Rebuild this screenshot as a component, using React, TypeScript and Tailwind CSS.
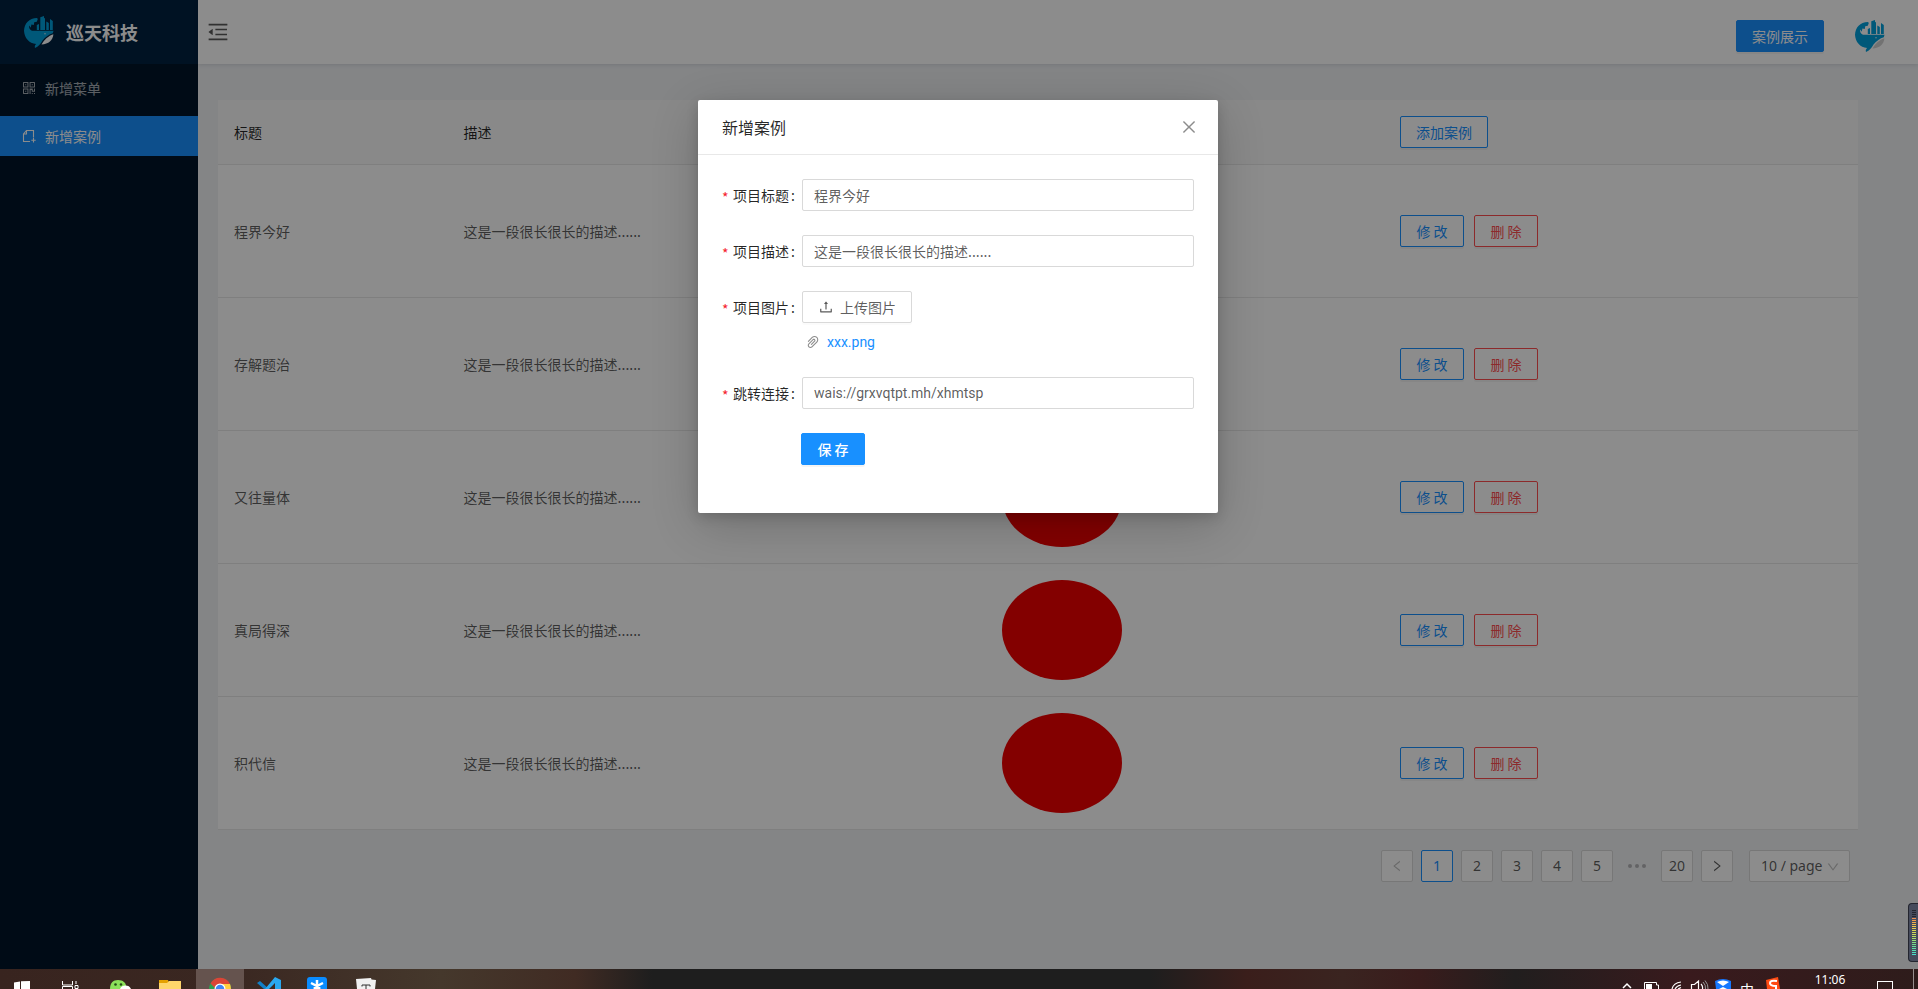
import { useState } from "react";
import type { ReactNode } from "react";
import {
  AiOutlineClose,
  AiOutlineDown,
  AiOutlineLeft,
  AiOutlineMenuFold,
  AiOutlinePaperClip,
  AiOutlineQrcode,
  AiOutlineRight,
  AiOutlineUpload,
} from "react-icons/ai";

type Case = { id: number; title: string; desc: string };

const DESC = "这是一段很长很长的描述......";

const cases: Case[] = [
  { id: 1, title: "程界今好", desc: DESC },
  { id: 2, title: "存解题治", desc: DESC },
  { id: 3, title: "又往量体", desc: DESC },
  { id: 4, title: "真局得深", desc: DESC },
  { id: 5, title: "积代信", desc: DESC },
];

const Logo = ({ belly }: { belly: string }) => (
  <svg viewBox="0 0 30 32" className="h-8 w-[30px] shrink-0" aria-hidden="true">
    <path d="M13 2C5 2 .3 7.500 0 15h8c-2.500-1.500-3.200-3.200-2.800-5.400l1.600 2.200.6-3.200 2.400.4.4-2.800 2.600-.4 1-2.800z" fill="#00a0dc" />
    <path d="M12.800 14V9l2.200-1v6zM16.300 14V1.200L20 0v1.800l1 .8V14zM22.300 14V5.600l2.500 1.400v7zM26 14V3l2.800 2v9z" fill="#00a0dc" />
    <path d="M0 14.800h29.500L28.800 17.200C25 18.200 21.500 20.800 18.500 24.500 16.500 28 14.500 30.800 11 32c-.6-1.800 0-3 1.200-4C5 27.400.4 22 0 14.800z" fill="#00a0dc" />
    <path d="M29.400 18.200C29 24 24.500 28.200 17.500 28.400 20.500 23.500 23.500 20.400 29.400 18.200z" fill={belly} />
    <circle cx="21" cy="17.800" r=".7" fill="#e6f4fb" />
  </svg>
);

const PageAddIcon = () => (
  <svg viewBox="0 0 16 16" className="h-4 w-4" fill="none" stroke="currentColor" strokeWidth="1.1" aria-hidden="true">
    <path d="M9 13.500H2.500V6L5.500 2.500h7V9.500M5.500 2.500V6h-3M12.500 10v4.500M10.300 12.200h4.400" />
  </svg>
);

const Button = ({ kind, children, onClick }: { kind: string; children: ReactNode; onClick?: () => void }) => {
  const styles: Record<string, string> = {
    primary: "border-[#1890ff] bg-[#1890ff] text-white",
    outline: "border-[#1890ff] bg-white text-[#1890ff]",
    danger: "border-[#ff4d4f] bg-white text-[#ff4d4f]",
  };
  return (
    <button
      type="button"
      onClick={onClick}
      className={`h-8 min-w-16 rounded-xs border px-[15px] text-sm leading-5 whitespace-nowrap shadow-[0_2px_0_rgba(0,0,0,0.045)] cursor-pointer ${styles[kind]}`}
    >
      {children}
    </button>
  );
};

const Sidebar = () => (
  <aside className="w-[198px] shrink-0 bg-[#001529]">
    <div className="flex h-16 items-center gap-3 bg-[#002140] pl-6">
      <Logo belly="#ffffff" />
      <h1 className="text-lg font-bold text-white">巡天科技</h1>
    </div>
    <nav className="flex flex-col gap-2 pt-1 text-sm">
      <a href="#menu" className="flex h-10 items-center gap-2 pl-[21px] text-white/65">
        <AiOutlineQrcode size={16} />
        新增菜单
      </a>
      <a href="#case" className="flex h-10 items-center gap-2 bg-[#1890ff] pl-[21px] text-white">
        <PageAddIcon />
        新增案例
      </a>
    </nav>
  </aside>
);

const Header = () => (
  <header className="flex h-16 items-center justify-between bg-white pr-[33px] pl-2 shadow-[0_1px_4px_rgba(0,21,41,0.12)]">
    <button type="button" aria-label="折叠菜单" className="text-black/65 cursor-pointer">
      <AiOutlineMenuFold size={24} />
    </button>
    <div className="flex items-center gap-[31px] pt-2">
      <Button kind="primary">案例展示</Button>
      <Logo belly="#d0d0d0" />
    </div>
  </header>
);

const CaseTable = ({ onAdd }: { onAdd: () => void }) => (
  <table className="w-full table-fixed border-separate border-spacing-0 bg-white text-left text-sm text-black/65">
    <colgroup>
      <col className="w-[14%]" />
      <col className="w-[32.8%]" />
      <col className="w-[24.3%]" />
      <col />
    </colgroup>
    <thead>
      <tr className="bg-[#fafafa] text-black/85">
        <th className="border-b border-[#e8e8e8] p-4 font-normal">标题</th>
        <th className="border-b border-[#e8e8e8] p-4 font-normal">描述</th>
        <th className="border-b border-[#e8e8e8] p-4 font-normal">图片</th>
        <th className="border-b border-[#e8e8e8] p-4 font-normal">
          <Button kind="outline" onClick={onAdd}>添加案例</Button>
        </th>
      </tr>
    </thead>
    <tbody>
      {cases.map((item) => (
        <tr key={item.id}>
          <td className="border-b border-[#e8e8e8] p-4">{item.title}</td>
          <td className="border-b border-[#e8e8e8] p-4">{item.desc}</td>
          <td className="border-b border-[#e8e8e8] p-4">
            <svg viewBox="0 0 120 100" className="h-[100px] w-[120px]" aria-hidden="true">
              <ellipse cx="60" cy="50" rx="60" ry="50" fill="#ee0000" />
            </svg>
          </td>
          <td className="border-b border-[#e8e8e8] p-4">
            <div className="flex gap-[10px]">
              <Button kind="outline">修 改</Button>
              <Button kind="danger">删 除</Button>
            </div>
          </td>
        </tr>
      ))}
    </tbody>
  </table>
);

const Pagination = () => {
  const [page, setPage] = useState(1);
  const box = "flex h-8 w-8 items-center justify-center rounded-xs border bg-white cursor-pointer";
  const pageButton = (n: number) => (
    <button
      key={n}
      type="button"
      onClick={() => setPage(n)}
      className={`${box} ${n === page ? "border-[#1890ff] text-[#1890ff]" : "border-[#d9d9d9]"}`}
    >
      {n}
    </button>
  );
  return (
    <div className="mt-5 flex justify-end gap-2 pr-2 font-['Noto_Sans',sans-serif] text-sm text-black/65">
      <button type="button" aria-label="上一页" className={`${box} border-[#d9d9d9] text-black/25`}>
        <AiOutlineLeft size={14} />
      </button>
      {[1, 2, 3, 4, 5].map(pageButton)}
      <span className="flex h-8 w-8 items-center justify-center gap-[3px]">
        <i className="h-1 w-1 rounded-full bg-black/25" />
        <i className="h-1 w-1 rounded-full bg-black/25" />
        <i className="h-1 w-1 rounded-full bg-black/25" />
      </span>
      {pageButton(20)}
      <button type="button" aria-label="下一页" className={`${box} border-[#d9d9d9]`}>
        <AiOutlineRight size={14} />
      </button>
      <div className="relative ml-2">
        <select
          aria-label="每页条数"
          className="h-8 w-[101px] appearance-none rounded-xs border border-[#d9d9d9] bg-white pl-[11px] text-sm"
        >
          <option>10 / page</option>
          <option>20 / page</option>
        </select>
        <AiOutlineDown size={14} className="pointer-events-none absolute top-[10px] right-[10px] text-black/25" />
      </div>
    </div>
  );
};

const FormRow = ({ id, label, children }: { id: string; label: string; children: ReactNode }) => (
  <div className="mb-6 flex items-start">
    <label htmlFor={id} className="flex h-8 w-20 shrink-0 items-center text-sm text-black/85">
      <span className="mr-1 w-[7px] pt-1 text-[#f5222d]">*</span>
      {label}
      <span className="ml-[2px]">:</span>
    </label>
    <div className="flex-1">{children}</div>
  </div>
);

const inputClass =
  "block h-8 w-full rounded-xs border border-[#d9d9d9] px-[11px] text-sm text-black/65 outline-none focus:border-[#40a9ff]";

const AddCasePop = ({ setShowPop }: { setShowPop: (b: boolean) => void }) => (
  <div onClick={() => setShowPop(false)} className="absolute inset-0 z-50 bg-black/45 pt-[100px] pr-0.5">
    <div
      role="dialog"
      aria-label="新增案例"
      onClick={(e) => e.stopPropagation()}
      className="mx-auto w-[520px] rounded-xs bg-white shadow-[0_4px_12px_rgba(0,0,0,0.15),0_12px_48px_rgba(0,0,0,0.2)]"
    >
      <div className="flex h-[55px] items-center justify-between border-b border-[#e8e8e8] pr-5 pl-6">
        <h2 className="text-base text-black/85">新增案例</h2>
        <button type="button" aria-label="关闭" className="text-black/45 cursor-pointer" onClick={() => setShowPop(false)}>
          <AiOutlineClose size={18} />
        </button>
      </div>

      <form className="p-6">
        <FormRow id="title" label="项目标题">
          <input id="title" className={inputClass} defaultValue="程界今好" />
        </FormRow>
        <FormRow id="desc" label="项目描述">
          <input id="desc" className={inputClass} defaultValue={DESC} />
        </FormRow>
        <FormRow id="upload" label="项目图片">
          <button
            id="upload"
            type="button"
            className="flex h-8 items-center gap-1.5 rounded-xs border border-[#d9d9d9] px-[15px] text-sm text-black/65 shadow-[0_2px_0_rgba(0,0,0,0.015)] cursor-pointer"
          >
            <AiOutlineUpload size={16} />
            上传图片
          </button>
          <div className="mt-2 flex h-[22px] items-center gap-1.5 pl-[3px] text-sm">
            <AiOutlinePaperClip size={16} className="text-black/45" />
            <a href="#xxx.png" className="font-[Roboto,sans-serif] text-[#1890ff]">xxx.png</a>
          </div>
        </FormRow>
        <FormRow id="link" label="跳转连接">
          <input
            id="link"
            className={`${inputClass} font-[Roboto,sans-serif]`}
            defaultValue="wais://grxvqtpt.mh/xhmtsp"
          />
        </FormRow>
        <div className="mb-6 pl-[79px] font-medium">
          <Button kind="primary">保 存</Button>
        </div>
      </form>
    </div>
  </div>
);

// left side of the taskbar, every icon is cut off by the lower edge
const appIcons: { name: string; art: ReactNode }[] = [
  {
    name: "start",
    art: <path d="M2 5.500l6-1V12H2zM9 4.300l9-.3v8H9z" fill="#fff" />,
  },
  {
    name: "tasks",
    art: <path d="M1.500 4v4h10V4M1.500 12V9.500h10V12M15 4v3M14 8.500h3v3h-3z" fill="none" stroke="#fff" />,
  },
  {
    name: "wechat",
    art: (
      <>
        <path d="M0 12C0 6 3 3 8 3s8 3 8 6v3z" fill="#8be05a" />
        <path d="M10 12c1-3 3-3.500 5.500-3.500S20 9.500 21 12z" fill="#fff" />
        <circle cx="5.500" cy="7.500" r="1.300" fill="#234a17" />
        <circle cx="11" cy="7.500" r="1.300" fill="#234a17" />
      </>
    ),
  },
  {
    name: "folder",
    art: (
      <>
        <path d="M0 3h9l1 3v2H0z" fill="#e5a100" />
        <path d="M0 6h8l2-2h12v8H0z" fill="#ffd66b" />
      </>
    ),
  },
  {
    name: "chrome",
    art: (
      <>
        <circle cx="12" cy="12" r="11" fill="#2f9e51" />
        <path d="M2.500 6.500A11 11 0 0 1 22 7H12a5.500 5.500 0 0 0-5 4z" fill="#db4437" />
        <path d="M12 7h10a11 11 0 0 1 1 5h-6z" fill="#ffcd40" />
        <circle cx="12" cy="12" r="5.500" fill="#fff" />
        <circle cx="12" cy="12" r="4.300" fill="#4285f4" />
      </>
    ),
  },
  {
    name: "code",
    art: (
      <>
        <path d="M0 6l3-2 9 8H7z" fill="#1180c8" />
        <path d="M8 12L18 0l6 3v9h-6V6l-6 6z" fill="#29a8f0" />
      </>
    ),
  },
  {
    name: "star",
    art: (
      <>
        <path d="M1 12V3q0-3 3-3h14q3 0 3 3v9z" fill="#0a8cff" />
        <path d="M11 3v9M5 6l6 3 6-3M8 12l3-3 3 3" fill="none" stroke="#fff" strokeWidth="2.500" />
      </>
    ),
  },
  {
    name: "typora",
    art: (
      <>
        <path d="M1 2l15-1 .500 1.500L21 3l-1 9H2z" fill="#f1f1f1" />
        <path d="M7 9.500V8h8v1.500M11 8v4" fill="none" stroke="#333" />
      </>
    ),
  },
];

const trayIcons: { name: string; art: ReactNode }[] = [
  { name: "more", art: <path d="M8 11l4-4 4 4" fill="none" stroke="#fff" strokeWidth="1.500" /> },
  {
    name: "battery",
    art: (
      <>
        <path d="M5.500 12V5.500h12V8h2v4" fill="none" stroke="#fff" />
        <path d="M7 7h6v5H7z" fill="#fff" />
      </>
    ),
  },
  {
    name: "wifi",
    art: <path d="M9 12c1-4 4-6.500 9-7M12 12c1-2 3-3.500 6-4M15 12l3-1.500" fill="none" stroke="#fff" strokeWidth="1.200" />,
  },
  {
    name: "volume",
    art: (
      <>
        <path d="M4.500 12V7.500h3L11.500 4v8M14 7q2 2 1.500 5" fill="none" stroke="#fff" strokeWidth="1.200" />
        <path d="M16 5q3 3 2.500 7M18 3.500q3.500 4 3 8.500" fill="none" stroke="#999" />
      </>
    ),
  },
  {
    name: "shield",
    art: (
      <>
        <path d="M4 4q8-4 16 0v8H5z" fill="#1677ff" />
        <path d="M6 5q6-3 12 0l-6 4zM8 12l4-2 4 2z" fill="#fff" />
      </>
    ),
  },
];

const Taskbar = () => (
  <footer className="flex h-5 shrink-0 justify-between overflow-hidden bg-[linear-gradient(90deg,#38241f_0%,#3a2721_12%,#45382c_23%,#402b23_30%,#1e1e1e_34%,#1e1e1e_60%,#3a1e1b_65%,#3a2420_70%,#391c1c_74%,#211e1e_79%,#391a1d_88%,#2e1c1b_100%)]">
    <div className="flex gap-px">
      {appIcons.map((app) => (
        <span
          key={app.name}
          className={`flex w-12 items-end justify-center ${app.name === "chrome" ? "bg-[#65534e]" : ""}`}
        >
          <svg viewBox="0 0 24 12" className="h-3 w-6" aria-hidden="true">{app.art}</svg>
        </span>
      ))}
    </div>
    <div className="flex">
      {trayIcons.map((icon) => (
        <span key={icon.name} className="flex w-6 items-end justify-center">
          <svg viewBox="0 0 24 12" className="h-3 w-6" aria-hidden="true">{icon.art}</svg>
        </span>
      ))}
      <span className="w-6 pt-3 text-center text-sm leading-4 text-white">中</span>
      <span className="flex w-6 items-end justify-center">
        <svg viewBox="0 0 24 12" className="h-3 w-6" aria-hidden="true">
          <path d="M7 3l12-3 2 12H8z" fill="#ff4a12" />
          <path d="M18 4q-7-1-7 2t6 3v3" fill="none" stroke="#fff" strokeWidth="2" />
        </svg>
      </span>
      <span className="w-[94px] text-center font-['Noto_Sans',sans-serif] text-xs leading-[22px] text-white">11:06</span>
      <span className="mt-3 mr-5 h-4 w-4 border border-white" />
      <span className="mr-1 w-px bg-white/50" />
    </div>
  </footer>
);

const LevelMeter = () => (
  <div className="absolute right-0 bottom-[7px] z-[60] flex h-[59px] w-[10px] flex-col items-end rounded-l-sm border border-r-0 border-[#23252f] bg-[#464b5c] pt-[6px] pr-[2px]">
    <div className="h-2 w-1 bg-[repeating-linear-gradient(180deg,#23252f_0_1px,transparent_1px_2px)]" />
    <div className="h-[38px] w-1 bg-[linear-gradient(180deg,#f08a4b,#f0c84b_20%,#c8e05a_45%,#6fe08a_70%,#3fe0d8)]">
      <div className="h-full bg-[repeating-linear-gradient(180deg,transparent_0_1px,#464b5c_1px_2px)]" />
    </div>
  </div>
);

export default function App() {
  const [showPop, setShowPop] = useState(true);
  return (
    <div className="flex h-screen flex-col overflow-hidden font-['Noto_Sans_CJK_SC',sans-serif]">
      <div className="relative flex min-h-0 flex-1">
        <Sidebar />
        <div className="flex min-w-0 flex-1 flex-col bg-[#f0f2f5]">
          <Header />
          <main className="pt-9 pr-[60px] pl-5">
            <CaseTable onAdd={() => setShowPop(true)} />
            <Pagination />
          </main>
        </div>
        {showPop && <AddCasePop setShowPop={setShowPop} />}
        <LevelMeter />
      </div>
      <Taskbar />
    </div>
  );
}
